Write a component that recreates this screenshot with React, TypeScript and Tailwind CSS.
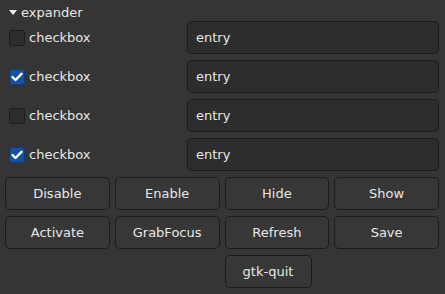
export default function App() {
  const rows = [false, true, false, true];
  const buttons = ["Disable", "Enable", "Hide", "Show", "Activate", "GrabFocus", "Refresh", "Save"];

  return (
    <div
      className="h-[294px] w-[445px] bg-[#353535] text-[13px] text-[#e8e8e6]"
      style={{ fontFamily: '"DejaVu Sans", sans-serif' }}
    >
      <div className="flex h-[21px] items-center pl-[9px] pt-[4px]">
        <svg width="8" height="5" viewBox="0 0 8 5" className="mr-[4px]">
          <polygon points="0,0 8,0 4,5" fill="#eeeeec" />
        </svg>
        <span>expander</span>
      </div>

      <div className="grid grid-cols-[176px_1fr] gap-x-[6px] gap-y-[6px] pl-[5px] pr-[6px]">
        {rows.map((checked, i) => (
          <div key={i} className="contents">
            <div className="flex h-[33px] items-center pl-[4px]">
              {checked ? (
                <span className="flex h-[16px] w-[16px] items-center justify-center rounded-[3px] border border-[#0f3b71] bg-[#15539e]">
                  <svg width="12" height="10" viewBox="0 0 12 10">
                    <path d="M1.5 5 L4.5 8 L10.5 1.8" fill="none" stroke="#ffffff" strokeWidth="2.4" strokeLinecap="round" strokeLinejoin="round" />
                  </svg>
                </span>
              ) : (
                <span className="h-[16px] w-[16px] rounded-[3px] border border-[#1b1b1b] bg-[#2d2d2d]" />
              )}
              <span className="ml-[4px]">checkbox</span>
            </div>
            <div className="flex h-[33px] items-center rounded-[5px] border border-[#1b1b1b] bg-[#2d2d2d] px-[8px]">
              entry
            </div>
          </div>
        ))}
      </div>

      <div className="mt-[6px] grid grid-cols-4 gap-x-[5px] gap-y-[6px] pl-[5px] pr-[6px]">
        {buttons.map((b) => (
          <button
            key={b}
            className="flex h-[33px] items-center justify-center rounded-[5px] border border-[#1b1b1b] bg-[#373737] font-normal"
          >
            {b}
          </button>
        ))}
        <button className="col-start-3 flex h-[33px] w-[87px] items-center justify-center rounded-[5px] border border-[#1b1b1b] bg-[#373737] font-normal">
          gtk-quit
        </button>
      </div>
    </div>
  );
}
